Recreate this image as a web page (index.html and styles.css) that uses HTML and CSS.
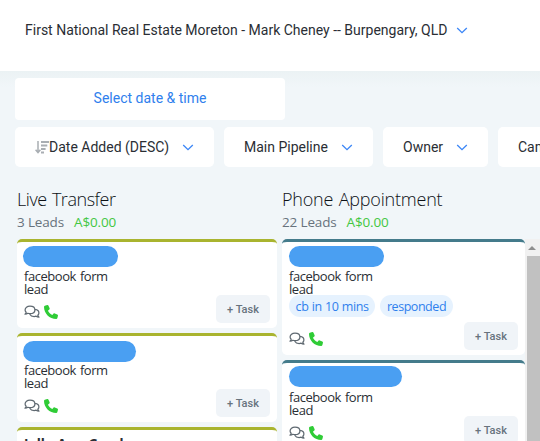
FILE: index.html
```html
<!DOCTYPE html>
<html lang="en">
<head>
<meta charset="utf-8">
<title>Leads pipeline</title>
<link rel="stylesheet" href="styles.css">
</head>
<body>
<svg class="defs" width="0" height="0">
  <symbol id="chevron" viewBox="0 0 12 7"><path d="M1.2 1 6 5.7 10.8 1" fill="none" stroke="currentColor" stroke-width="1.3"/></symbol>
  <symbol id="chat" viewBox="0 0 16 14"><path d="M6 1.2c2.8 0 4.9 1.6 4.9 3.8S8.800 8.700 6 8.700c-.8 0-1.500-.1-2.100-.4-.8.6-1.700.9-2.900.9.600-.6 1-1.200 1.200-1.900C1.500 6.700 1.100 5.900 1.100 5c0-2.200 2.100-3.800 4.900-3.800Z M11 4.400c2.300.3 3.900 1.700 3.900 3.500 0 .9-.4 1.700-1.100 2.400.2.600.6 1.200 1.200 1.800-1.200 0-2.100-.3-2.900-.9-.7.2-1.300.3-2 .3-2 0-3.600-.9-4.400-2.300" fill="none" stroke="currentColor" stroke-width="1.25" stroke-linejoin="round"/></symbol>
  <symbol id="phone" viewBox="0 0 512 512"><path d="M164.900 24.600c-7.700-18.600-28-28.500-47.400-23.200l-88 24C12.100 30.200 0 46 0 64c0 247.400 200.600 448 448 448 18 0 33.800-12.100 38.600-29.500l24-88c5.300-19.400-4.600-39.700-23.200-47.400l-96-40c-16.300-6.800-35.200-2.100-46.300 11.600L304.700 368C234.300 334.700 177.300 277.700 144 207.300l49.300-40.300c13.700-11.200 18.400-30 11.600-46.300l-40-96z" fill="currentColor"/></symbol>
</svg>

<header class="topbar">
  <span class="account">First National Real Estate Moreton - Mark Cheney -- Burpengary, QLD</span>
  <svg class="chevron"><use href="#chevron"/></svg>
</header>

<main class="content">
  <button class="date">Select date &amp; time</button>
  <div class="filters">
    <div class="filter sort">
      <svg class="sort-icon" viewBox="0 0 14 13"><path d="M3 0v11M.6 8.700 3 11.500l2.400-2.800" fill="none" stroke="currentColor" stroke-width="1.500"/><path d="M6 0h8v2H6zM6 3.500h6.300v2H6zM6 7h4.600v2H6zM6 10.500h3v2H6z" fill="currentColor"/></svg>
      <span class="sort-label">Date Added (DESC)</span><svg class="chevron"><use href="#chevron"/></svg>
    </div>
    <div class="filter pipeline"><span>Main Pipeline</span><svg class="chevron"><use href="#chevron"/></svg></div>
    <div class="filter owner"><span>Owner</span><svg class="chevron"><use href="#chevron"/></svg></div>
    <div class="filter campaign"><span>Campaign</span><svg class="chevron"><use href="#chevron"/></svg></div>
  </div>

  <div class="heads">
    <div class="head"><h2 class="live">Live Transfer</h2><p><span class="count">3 Leads</span><span class="money">A$0.00</span></p></div>
    <div class="head"><h2 class="appt">Phone Appointment</h2><p><span class="count">22 Leads</span><span class="money">A$0.00</span></p></div>
  </div>

  <div class="board">
    <div class="column olive">
      <article class="card">
        <div class="mask"></div>
        <p class="source">facebook form<br>lead</p>
        <footer><svg class="chat"><use href="#chat"/></svg><svg class="phone"><use href="#phone"/></svg><button class="task">+ Task</button></footer>
      </article>
      <article class="card">
        <div class="mask wide low"></div>
        <p class="source">facebook form<br>lead</p>
        <footer><svg class="chat"><use href="#chat"/></svg><svg class="phone"><use href="#phone"/></svg><button class="task">+ Task</button></footer>
      </article>
      <article class="card"><h3>Jelly-Ann Goody</h3></article>
    </div>
    <div class="column teal">
      <article class="card tagged">
        <div class="mask"></div>
        <p class="source">facebook form<br>lead</p>
        <div class="tags"><span class="tag cb">cb in 10 mins</span><span class="tag resp">responded</span></div>
        <footer><svg class="chat"><use href="#chat"/></svg><svg class="phone"><use href="#phone"/></svg><button class="task">+ Task</button></footer>
      </article>
      <article class="card">
        <div class="mask wide"></div>
        <p class="source">facebook form<br>lead</p>
        <footer><svg class="chat"><use href="#chat"/></svg><svg class="phone"><use href="#phone"/></svg><button class="task">+ Task</button></footer>
      </article>
    </div>
    <div class="scrollbar"><div class="arrow"></div><div class="thumb"></div></div>
  </div>
</main>
</body>
</html>
```
FILE: styles.css
```css
* { box-sizing: border-box; margin: 0; padding: 0; }
html, body { width: 540px; height: 441px; overflow: hidden; }
body { background: #f1f6f9; font-family: Roboto, sans-serif; font-size: 14px; color: #2a2e34; }
button { border: 0; font-family: inherit; }
.defs { display: none; }
svg { flex: none; }

.topbar { height: 71px; padding: 0 0 11px 25px; background: #fff; display: flex; align-items: center; gap: 9px; }
.account { white-space: nowrap; }
.chevron { width: 12px; height: 7px; color: #3b86f7; }

.content { height: 370px; padding-top: 7px; background: linear-gradient(#ebf2f4, #f1f6f9 16px); }
.date { display: block; width: 270px; height: 42px; margin-left: 15px; border-radius: 4px; background: #fff; color: #2f80ed; font-size: 14px; padding-bottom: 2px; }
.filters { display: flex; gap: 10px; margin: 7px 0 0 15px; overflow: hidden; }
.filter { flex: none; height: 40px; border-radius: 5px; background: #fff; padding: 0 20px; display: flex; align-items: center; justify-content: space-between; white-space: nowrap; }
.sort { width: 199px; }
.pipeline { width: 149px; }
.owner { width: 105px; }
.campaign { width: 130px; }
.sort-icon { width: 14px; height: 13px; color: #a9aeb3; }
.sort-label { margin-right: auto; }

.heads { height: 72px; padding: 21px 0 0 17px; display: grid; grid-template-columns: 265px 1fr; font-family: "Open Sans", sans-serif; }
.head h2 { font-size: 18px; font-weight: 300; line-height: 22px; letter-spacing: -.2px; word-spacing: 1px; color: #0d1116; }
.head .live { letter-spacing: -.45px; }
.head p { display: flex; gap: 10px; font-size: 13.5px; line-height: 24px; letter-spacing: -.15px; color: #68737d; }
.head .money { color: #43c743; }

.board { height: 202px; margin-left: 12px; padding-left: 5px; display: flex; gap: 5px; overflow: hidden; }
.column { display: flex; flex-direction: column; gap: 5px; }
.olive { width: 260px; --accent: #a9b42f; }
.teal { width: 243px; --accent: #447b8b; }
.card { flex: none; height: 89px; border-radius: 5px; border-top: 3px solid var(--accent); background: #fff; padding: 4px 7px 5px; display: flex; flex-direction: column; }
.tagged { height: 116px; }
.mask { flex: none; width: 95px; height: 21px; border-radius: 11px; background: #4a9ff2; margin: 0 0 3px -1px; }
.teal .mask { margin-left: 0; }
.wide { width: 113px; }
.teal .wide { margin-top: -1px; margin-bottom: 4px; }
.low { margin-top: 1px; margin-bottom: 2px; }
.source { font: 13px/13px "Open Sans", sans-serif; letter-spacing: -.45px; word-spacing: 1px; margin-bottom: -1px; }
.tags { display: flex; gap: 5px; }
.tag { height: 22px; border-radius: 11px; background: #e6f2fe; color: #2f80ed; font: 12.5px/23px "Open Sans", sans-serif; letter-spacing: -.45px; word-spacing: .6px; text-align: center; white-space: nowrap; }
.cb { width: 86px; }
.resp { width: 73px; }
.card footer { margin-top: auto; height: 28px; display: flex; align-items: center; }
.chat { width: 16px; height: 14px; color: #5f6971; margin-top: 6px; }
.phone { width: 14px; height: 14px; color: #2fcc36; margin: 6px 0 0 4px; }
.task { width: 54px; height: 28px; margin-left: auto; border-radius: 5px; background: #f0f4f8; color: #68737d; font-size: 11px; font-weight: 500; }
.card h3 { font: 700 13.5px/20px "Open Sans", sans-serif; letter-spacing: .1px; }
.scrollbar { width: 15px; margin-left: -5px; padding-left: 2px; background: #f1f1f1; }
.arrow { width: 0; height: 0; margin: 7px 0 6px 1px; border: 4px solid transparent; border-top: 0; border-bottom-color: #8f8f8f; }
.thumb { height: 190px; background: #c1c1c1; }
```
